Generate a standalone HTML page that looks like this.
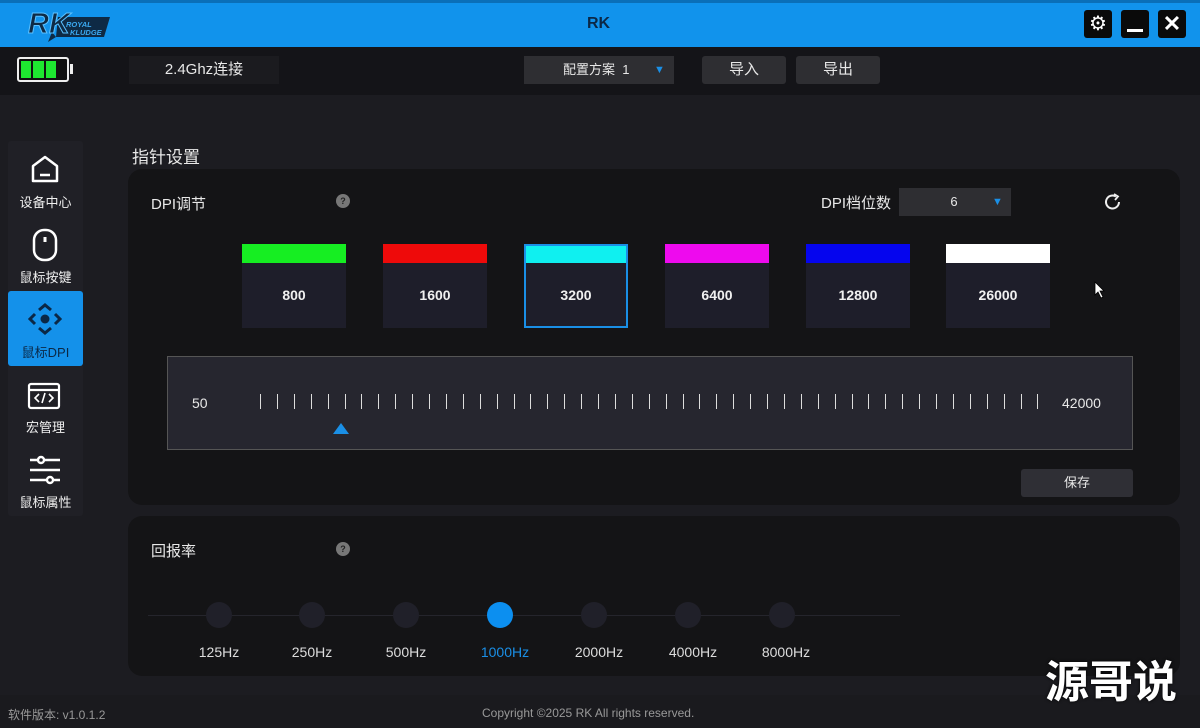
<!DOCTYPE html>
<html><head><meta charset="utf-8"><style>
*{margin:0;padding:0;box-sizing:border-box}
body{width:1200px;height:728px;overflow:hidden;background:#1c1c21;font-family:"Liberation Sans","Noto Sans CJK SC",sans-serif;color:#e8e8e8;position:relative}
.a{position:absolute}
.card{position:absolute;top:244px;width:104px;height:84px;background:#1e1e2a}
.card .bar{height:19px}
.card .v{text-align:center;font-weight:bold;font-size:14px;color:#f0f0f0;margin-top:24px}
.tick{position:absolute;top:394px;width:1px;height:15px;background:#ddd}
.dot{position:absolute;top:602px;width:26px;height:26px;border-radius:50%;background:#202029}
.hz{position:absolute;top:644px;font-size:14px;color:#ddd;width:80px;text-align:center}
.nav{position:absolute;left:8px;width:75px;text-align:center;font-size:13px;color:#f0f0f0}
.q{position:absolute;width:14px;height:14px;border-radius:50%;background:#777;color:#222;font-size:9px;text-align:center;line-height:14px;font-weight:bold}
</style></head><body>
<div class="a" style="left:0;top:0;width:1200px;height:4px;background:#0a6fb8"></div>
<div class="a" style="left:0;top:3px;width:1200px;height:44px;background:#1193ec"></div>
<div class="a" style="left:26px;top:6px;width:86px;height:36px">
<svg width="86" height="36"><path d="M32 11 L84 11 L78 31 L30 31 Z" fill="#0e2a45"/><path d="M30 31 L22 36 L26 26 Z" fill="#0e2a45"/><text x="2" y="27" font-size="29" font-weight="bold" font-style="italic" fill="#0e2a45" stroke="#5bc0ff" stroke-width="1">RK</text><text x="40" y="21" font-size="7.5" font-weight="bold" fill="#3aa8f0" font-style="italic">ROYAL</text><text x="44" y="29" font-size="7.5" font-weight="bold" fill="#3aa8f0" font-style="italic">KLUDGE</text></svg></div>
<div class="a" style="left:587px;top:15px;font-weight:bold;font-size:16px;color:#0b2846">RK</div>
<div class="a" style="left:1084px;top:10px;width:28px;height:28px;background:#0a0a0a;border-radius:3px;color:#fff;font-size:20px;text-align:center;line-height:28px">⚙</div>
<div class="a" style="left:1121px;top:10px;width:28px;height:28px;background:#0a0a0a;border-radius:3px"><div class="a" style="left:6px;top:19px;width:16px;height:3px;background:#fff"></div></div>
<div class="a" style="left:1158px;top:10px;width:28px;height:28px;background:#0a0a0a;border-radius:3px;color:#fff;font-size:22px;font-weight:bold;text-align:center;line-height:28px">✕</div>
<div class="a" style="left:0;top:47px;width:1200px;height:48px;background:#141418"></div>
<div class="a" style="left:17px;top:57px;width:52px;height:25px;border:2px solid #eee;border-radius:3px;background:#111;padding:2px"><div style="width:35px;height:17px;background:#1ee830;position:relative"><div class="a" style="left:10px;top:0;width:2px;height:17px;background:#111"></div><div class="a" style="left:23px;top:0;width:2px;height:17px;background:#111"></div></div></div>
<div class="a" style="left:70px;top:64px;width:3px;height:10px;background:#eee"></div>
<div class="a" style="left:129px;top:56px;width:150px;height:28px;background:#1b1b1f;font-size:15px;text-align:center;line-height:28px">2.4Ghz连接</div>
<div class="a" style="left:524px;top:56px;width:150px;height:28px;background:#2e2e32;font-size:13px;line-height:28px;padding-left:39px">配置方案&nbsp; 1<span style="position:absolute;left:130px;color:#1a8fe6;font-size:11px">▼</span></div>
<div class="a" style="left:702px;top:56px;width:84px;height:28px;background:#2e2e32;border-radius:3px;font-size:15px;text-align:center;line-height:28px">导入</div>
<div class="a" style="left:796px;top:56px;width:84px;height:28px;background:#2e2e32;border-radius:3px;font-size:15px;text-align:center;line-height:28px">导出</div>
<div class="a" style="left:8px;top:141px;width:75px;height:375px;background:#202026;border-radius:3px"></div>
<div class="a" style="left:8px;top:291px;width:75px;height:75px;background:#1491ea;border-radius:3px"></div>
<svg class="a" style="left:30px;top:154px" width="30" height="30" fill="none" stroke="#fff" stroke-width="2.5"><path d="M3 12 L15 3 L27 12 L27 27 L3 27 Z" stroke-linejoin="round"/><path d="M10 21 H20"/></svg>
<div class="nav" style="top:192px">设备中心</div>
<svg class="a" style="left:32px;top:228px" width="26" height="34" fill="none" stroke="#fff" stroke-width="2.5"><rect x="2" y="2" width="22" height="30" rx="10"/><path d="M13 9 V14" stroke-width="3"/></svg>
<div class="nav" style="top:267px">鼠标按键</div>
<svg class="a" style="left:28px;top:303px" width="34" height="32" fill="none" stroke="#0b2846" stroke-width="3"><path d="M11 7 L17 2 L23 7 M11 25 L17 30 L23 25 M7 11 L2 16 L7 21 M27 11 L32 16 L27 21"/><circle cx="17" cy="16" r="4.5" fill="#0b2846" stroke="none"/></svg>
<div class="nav" style="top:342px;color:#0b2846">鼠标DPI</div>
<svg class="a" style="left:27px;top:382px" width="34" height="28" fill="none" stroke="#fff" stroke-width="2.2"><rect x="2" y="2" width="30" height="24" rx="2"/><path d="M2 8 H32"/><path d="M12 12 L8 16 L12 20 M22 12 L26 16 L22 20 M18 11 L15 21" stroke-width="1.6"/></svg>
<div class="nav" style="top:417px">宏管理</div>
<svg class="a" style="left:29px;top:455px" width="32" height="30" fill="none" stroke="#fff" stroke-width="2.4"><path d="M1 5 H31 M1 15 H31 M1 25 H31"/><circle cx="12" cy="5" r="3" fill="#202026"/><circle cx="21" cy="25" r="3" fill="#202026"/></svg>
<div class="nav" style="top:492px">鼠标属性</div>
<div class="a" style="left:132px;top:143px;font-size:17px">指针设置</div>
<div class="a" style="left:128px;top:169px;width:1052px;height:336px;background:#141416;border-radius:14px"></div>
<div class="a" style="left:151px;top:193px;font-size:15px">DPI调节</div>
<div class="q" style="left:336px;top:194px">?</div>
<div class="a" style="left:821px;top:192px;font-size:15px">DPI档位数</div>
<div class="a" style="left:899px;top:188px;width:112px;height:28px;background:#2e2e32;font-size:13px;line-height:28px;text-align:center;padding-right:2px">6<span style="position:absolute;left:93px;color:#1a8fe6;font-size:11px">▼</span></div>
<svg class="a" style="left:1104px;top:193px" width="18" height="18" fill="none" stroke="#eee" stroke-width="2"><path d="M15 9 A6.5 6.5 0 1 1 12 3.5"/><path d="M10 1 L14 3.5 L11 7" stroke-width="1.8"/></svg>
<div class="card" style="left:242px"><div class="bar" style="background:#16ee22"></div><div class="v">800</div></div>
<div class="card" style="left:383px"><div class="bar" style="background:#ee0a0a"></div><div class="v">1600</div></div>
<div class="card" style="left:524px;border:2px solid #1a8fe6"><div class="bar" style="background:#0ff0f0;height:17px"></div><div class="v" style="margin-top:24px">3200</div></div>
<div class="card" style="left:665px"><div class="bar" style="background:#ee0aee"></div><div class="v">6400</div></div>
<div class="card" style="left:806px"><div class="bar" style="background:#0505ee"></div><div class="v">12800</div></div>
<div class="card" style="left:946px"><div class="bar" style="background:#fff"></div><div class="v">26000</div></div>
<svg class="a" style="left:1094px;top:281px" width="12" height="18"><path d="M1 1 L1 14 L4 11 L7 17 L9 16 L6 10 L10 10 Z" fill="#fff" stroke="#000" stroke-width="0.8"/></svg>
<div class="a" style="left:167px;top:356px;width:966px;height:94px;background:#26262f;border:1px solid #555"></div>
<div class="a" style="left:192px;top:395px;font-size:14px">50</div>
<div class="a" style="left:1062px;top:395px;font-size:14px">42000</div>
<div id="ticks"></div>
<svg class="a" style="left:333px;top:422px" width="16" height="12"><path d="M0 12 L8 1 L16 12 Z" fill="#1a8fe6"/></svg>
<div class="a" style="left:1021px;top:469px;width:112px;height:28px;background:#2f2f35;border-radius:3px;font-size:13px;text-align:center;line-height:28px">保存</div>
<div class="a" style="left:128px;top:516px;width:1052px;height:160px;background:#141416;border-radius:14px"></div>
<div class="a" style="left:151px;top:540px;font-size:15px">回报率</div>
<div class="q" style="left:336px;top:542px">?</div>
<div class="a" style="left:148px;top:615px;width:752px;height:1px;background:#25252c"></div>
<div class="dot" style="left:206px"></div><div class="dot" style="left:299px"></div><div class="dot" style="left:393px"></div>
<div class="dot" style="left:487px;background:#0c8ff0"></div>
<div class="dot" style="left:581px"></div><div class="dot" style="left:675px"></div><div class="dot" style="left:769px"></div>
<div class="hz" style="left:179px">125Hz</div><div class="hz" style="left:272px">250Hz</div><div class="hz" style="left:366px">500Hz</div>
<div class="hz" style="left:465px;color:#1a8fe6">1000Hz</div><div class="hz" style="left:559px">2000Hz</div><div class="hz" style="left:653px">4000Hz</div><div class="hz" style="left:746px">8000Hz</div>
<div class="a" style="left:0;top:695px;width:1200px;height:33px;background:#1a1a1e"></div>
<div class="a" style="left:8px;top:706px;font-size:12px;color:#999">软件版本: v1.0.1.2</div>
<div class="a" style="left:482px;top:706px;font-size:12px;color:#999">Copyright ©2025 RK All rights reserved.</div>
<div class="a" style="left:1045px;top:646px;font-size:44px;font-weight:bold;color:#fff;font-family:'Noto Sans CJK SC',sans-serif;text-shadow:0 0 3px #000">源哥说</div>
<script>
var t=document.getElementById('ticks'),h='';
for(var i=0;i<47;i++){h+='<div class="tick" style="left:'+(260+i*16.9)+'px"></div>'}
t.innerHTML=h;
</script>
</body></html>
